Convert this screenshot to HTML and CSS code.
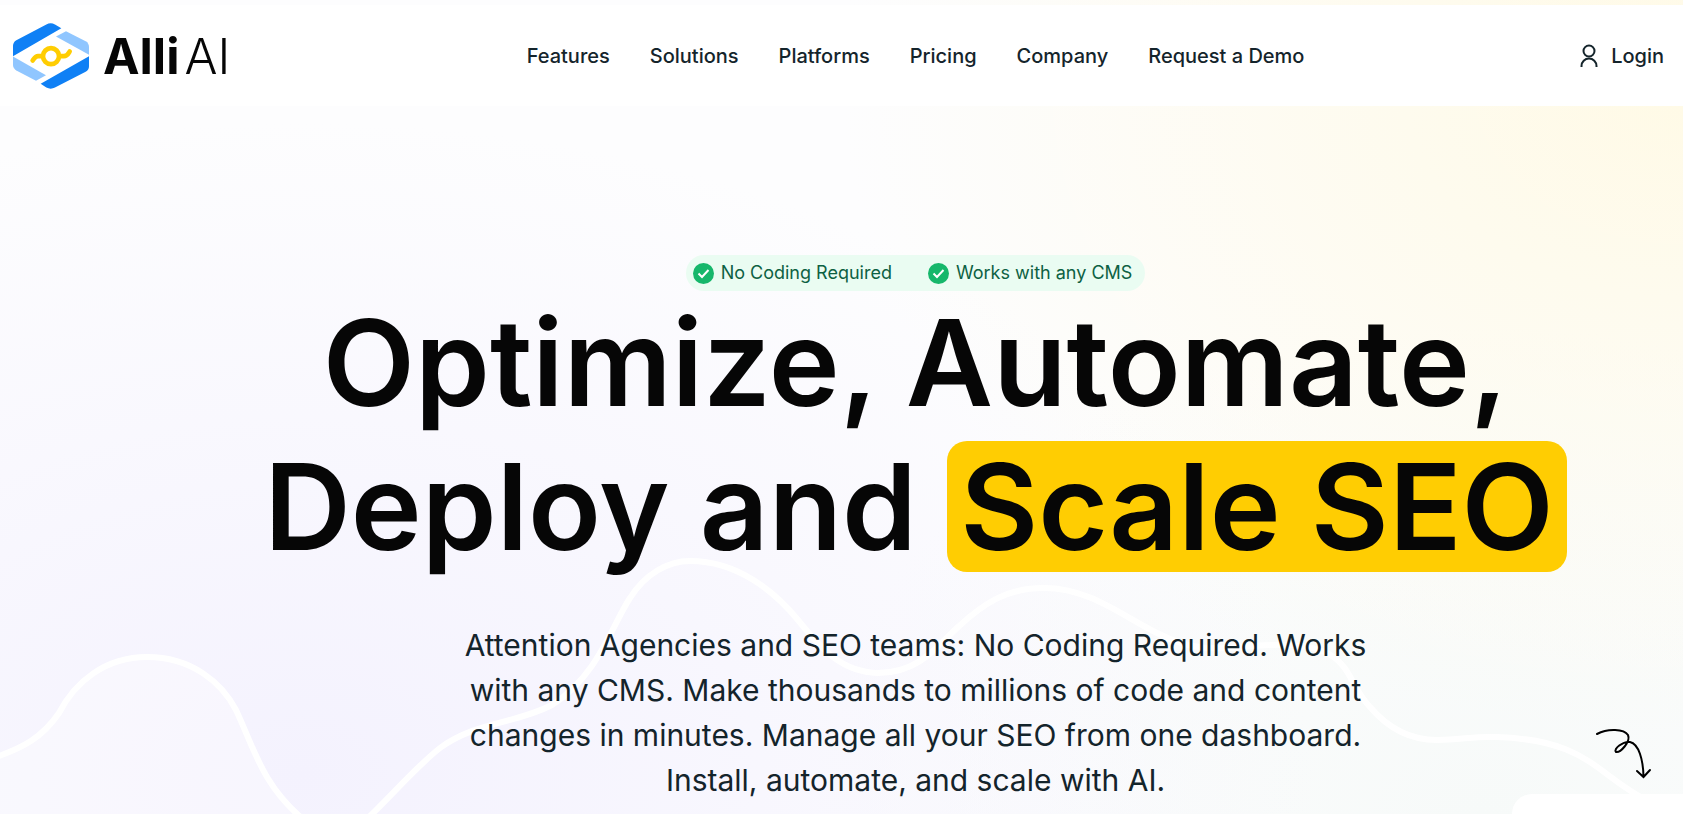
FILE: index.html
```html
<!DOCTYPE html>
<html lang="en">
<head>
  <meta charset="UTF-8" />
  <meta name="viewport" content="width=device-width, initial-scale=1.0" />
  <title>Alli AI</title>
  <link rel="stylesheet" href="styles.css">
</head>
<body>
  <svg class="waves" viewBox="0 0 1683 814" preserveAspectRatio="xMidYMax slice" aria-hidden="true">
    <path class="wave-fill" d="M-4 757C22 748 42 738 59 713C75 682 105 657 147 657C192 657 222 683 236 710C254 748 262 785 304 820H-4Z" />
    <path d="M-4 757C22 748 42 738 59 713C75 682 105 657 147 657C192 657 222 683 236 710C254 748 262 785 304 820M366 820C395 792 418 765 440 748C475 722 515 724 552 705C598 676 612 625 630 598C645 574 668 561 690 561C738 561 775 592 798 620C822 650 842 672 878 673C920 673 938 645 958 627C985 602 1008 588 1044 588C1090 588 1122 616 1157 633C1205 658 1235 645 1270 645C1355 642 1342 678 1370 707C1387 727 1408 740 1437 740C1460 740 1475 736 1496 737C1590 740 1595 775 1650 802" />
  </svg>

  <header class="header">
    <a class="logo" href="#">
      <svg class="logo-mark" viewBox="39 71 228 197" aria-hidden="true">
        <path fill="#0f80f5" d="M39 170V139Q39 128 49 122L139 75Q152 68 165 75L184 86Z" />
        <path fill="#90c6ff" d="M198 95L257 125Q267 131 267 142V166L168 111Z" />
        <path fill="#90c6ff" d="M39 171L138 227L108 244L49 213Q39 207 39 196Z" />
        <path fill="#0f80f5" d="M267 170V200Q267 211 257 217L165 264Q152 271 139 264L122 253Z" />
        <g fill="none" stroke="#ffcd02" stroke-width="14" stroke-linecap="round">
          <circle cx="153" cy="170" r="24" />
          <path d="M98 183C103 177 106 170 114 170H128M178 170H192C202 170 205 162 209 156" />
        </g>
      </svg>
      <span class="logo-text"><b>Alli</b><span>AI</span></span>
    </a>
    <nav class="nav">
      <a href="#">Features</a>
      <a href="#">Solutions</a>
      <a href="#">Platforms</a>
      <a href="#">Pricing</a>
      <a href="#">Company</a>
      <a href="#">Request a Demo</a>
    </nav>
    <a class="login" href="#">
      <svg viewBox="0 0 24 24" aria-hidden="true">
        <circle cx="12" cy="7" r="5.5" />
        <path d="M4.5 23V22A7.5 7.5 0 0 1 19.5 22V23" />
      </svg>
      Login
    </a>
  </header>

  <main class="hero">
    <ul class="badges">
      <li>
        <svg viewBox="0 0 21 21" aria-hidden="true"><circle cx="10.500" cy="10.500" r="10.500" /><path d="M5.500 10.500L9 14L15.500 7" /></svg>
        No Coding Required
      </li>
      <li>
        <svg viewBox="0 0 21 21" aria-hidden="true"><circle cx="10.500" cy="10.500" r="10.500" /><path d="M5.500 10.500L9 14L15.500 7" /></svg>
        Works with any CMS
      </li>
    </ul>
    <h1>Optimize, Automate,<br>Deploy and <span class="highlight">Scale SEO</span></h1>
    <p>Attention Agencies and SEO teams: No Coding Required. Works with any CMS. Make thousands to millions of code and content changes in minutes. Manage all your SEO from one dashboard. Install, automate, and scale with AI.</p>
  </main>

  <aside class="widget">
    <svg class="arrow" viewBox="0 0 66 64" aria-hidden="true">
      <path d="M7 14C18 8 34 9 38 15C41 22 30 33 26 32C23 29 33 21 40 22C49 24 53 40 53.500 56M47 51L53.500 57L60 50" />
    </svg>
    <div class="widget-panel"></div>
  </aside>
</body>
</html>
```
FILE: styles.css
```css
:root {
  --yellow: #ffcd02;
  --green: #16b76b;
  --text: #14242b;
  --heading: #060606;
}
* {
  box-sizing: border-box;
}
body {
  margin: 0;
  padding-top: 5px;
  min-height: 100vh;
  overflow: hidden;
  font-family: Inter, sans-serif;
  color: var(--text);
  background:
    radial-gradient(ellipse 50% 80% at 100% 10%, #fffae6, rgba(255, 251, 232, 0)),
    radial-gradient(ellipse 60% 80% at 18% 95%, #f4f2fe, rgba(245, 243, 254, 0)),
    radial-gradient(ellipse 40% 60% at 88% 100%, #f7faf9, rgba(247, 250, 249, 0)),
    #fdfdfe;
}
a {
  color: inherit;
  text-decoration: none;
}
.waves {
  position: absolute;
  inset: 0;
  z-index: -1;
  width: 100%;
  height: 100%;
  fill: none;
  stroke: #fff;
  stroke-width: 6;
}
.wave-fill {
  fill: rgba(255, 255, 255, 0.3);
  stroke: none;
}
.header {
  display: flex;
  align-items: center;
  justify-content: space-between;
  height: 101px;
  padding: 0 19px 0 13px;
  background: #fff;
  font-size: 20px;
  line-height: 30px;
  font-weight: 500;
}
.logo {
  display: flex;
  align-items: center;
  gap: 14px;
  width: 241px;
}
.logo-mark {
  width: 76px;
  height: 66px;
}
.logo-text {
  display: flex;
  gap: 5px;
  padding-top: 3px;
  font-size: 49px;
  line-height: 60px;
  font-weight: 300;
  color: var(--heading);
}
.logo-text b {
  font-weight: 700;
}
.nav {
  display: flex;
  gap: 40px;
}
.login {
  display: flex;
  align-items: center;
  gap: 10px;
}
.login svg {
  width: 24px;
  height: 24px;
  fill: none;
  stroke: var(--text);
  stroke-width: 2;
}
.hero {
  display: flex;
  flex-direction: column;
  align-items: center;
  padding: 149px 0 0 148px;
  text-align: center;
}
.badges {
  display: flex;
  gap: 36px;
  margin: 0;
  padding: 0 13px 0 7px;
  list-style: none;
  border-radius: 18px;
  background: #eafcf2;
  color: #0d6143;
  font-size: 18px;
  line-height: 36px;
}
.badges li {
  display: flex;
  align-items: center;
  gap: 7px;
}
.badges svg {
  width: 21px;
  height: 21px;
  fill: var(--green);
}
.badges path {
  fill: none;
  stroke: #fff;
  stroke-width: 2;
}
h1 {
  margin: 0;
  color: var(--heading);
  font-size: 120px;
  line-height: 144px;
  font-weight: 600;
  white-space: nowrap;
}
.highlight {
  display: inline-block;
  padding: 0 13px;
  line-height: 131px;
  border-radius: 20px;
  background: var(--yellow);
}
.hero p {
  max-width: 920px;
  margin: 44px 0 0;
  font-size: 30px;
  line-height: 45px;
}
.widget {
  position: fixed;
  right: 0;
  bottom: 0;
  width: 171px;
}
.arrow {
  display: block;
  width: 66px;
  height: 64px;
  margin: 0 27px 10px auto;
  fill: none;
  stroke: #000;
  stroke-width: 2;
  stroke-linecap: round;
}
.widget-panel {
  height: 20px;
  border-radius: 20px 0 0 0;
  background: #fff;
}
```
